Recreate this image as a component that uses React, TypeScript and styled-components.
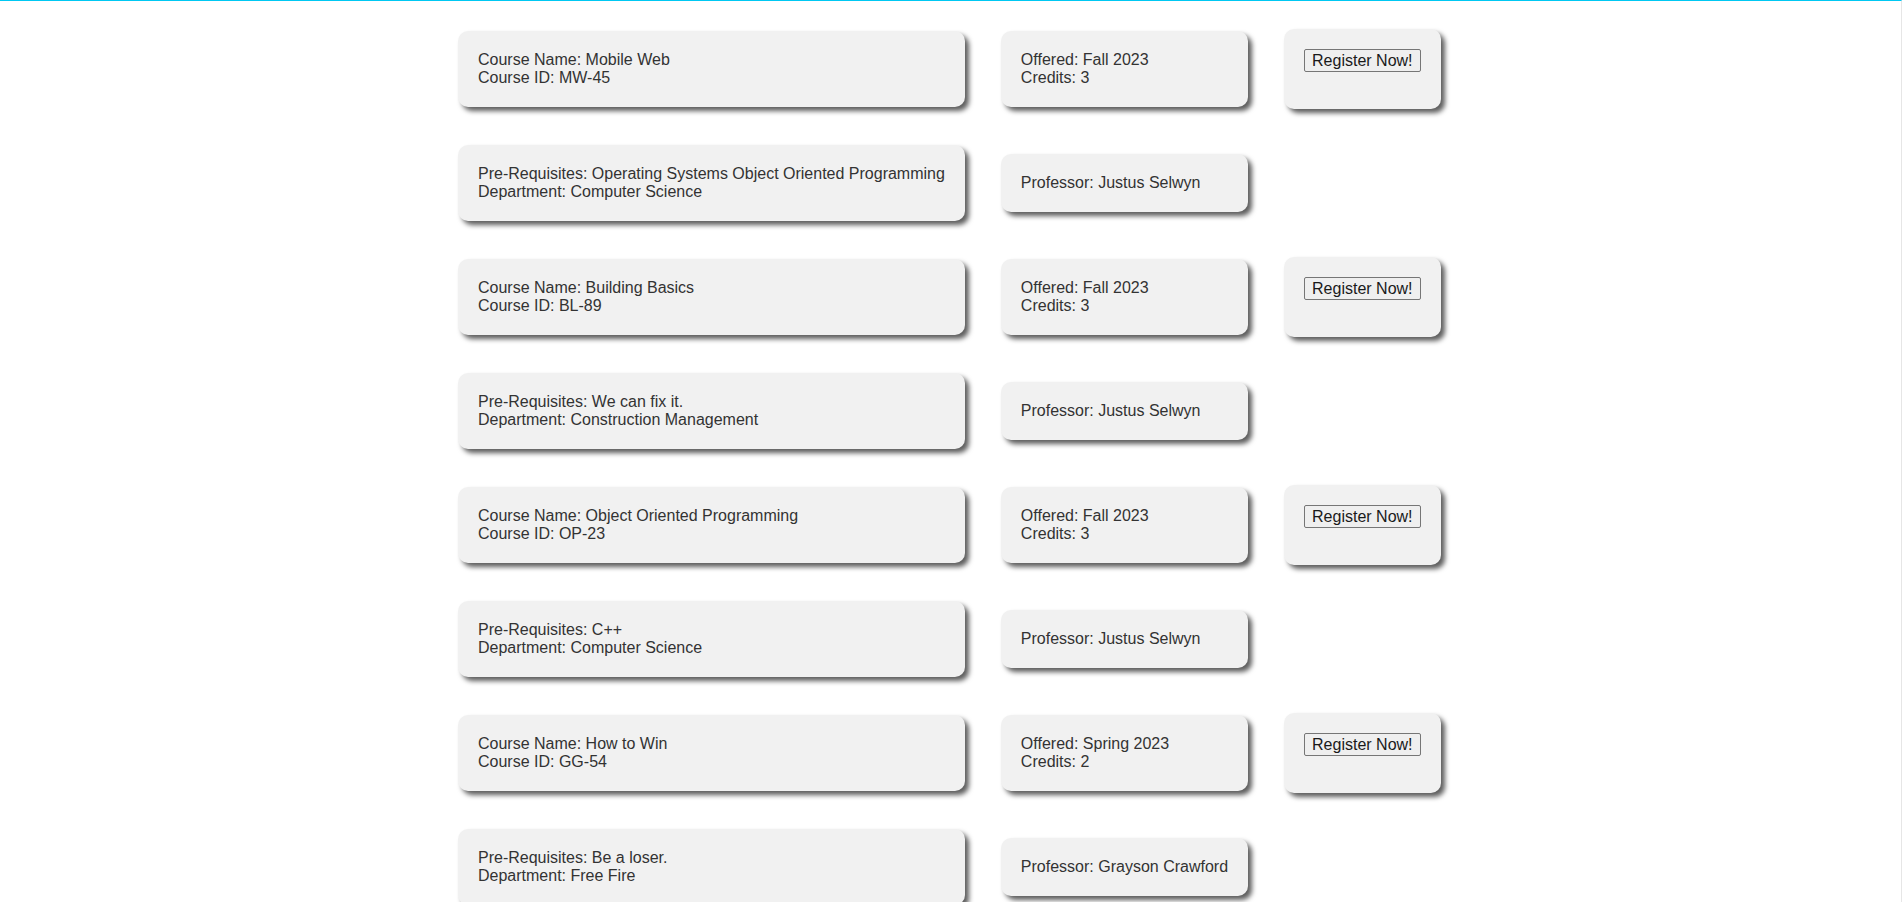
import React from "react";
import styled, { createGlobalStyle } from "styled-components";

const GlobalStyle = createGlobalStyle`
  html, body {
    margin: 0;
    padding: 0;
    background: #ffffff;
  }
  body {
    font-family: "Liberation Sans", Arial, sans-serif;
    font-size: 16px;
    color: #333333;
    overflow: hidden;
  }
`;

const Page = styled.div`
  min-height: 100vh;
  box-sizing: border-box;
  border-top: 1px solid #00c8f2;
  border-right: 1px solid #e6e6e6;
  padding: 28px 0 40px 458px;
`;

const CourseGrid = styled.div`
  display: grid;
  grid-template-columns: max-content max-content max-content;
  column-gap: 36px;
  row-gap: 36px;
  align-items: center;
  justify-items: stretch;
`;

const Card = styled.div`
  box-sizing: border-box;
  background: #f1f1f1;
  border-radius: 10px;
  padding: 20px;
  box-shadow: 4px 4px 5px #5e5e5e;
  line-height: 18px;
`;

const InfoLine = styled.div`
  white-space: nowrap;
`;

const RegisterCard = styled.div`
  box-sizing: border-box;
  background: #f1f1f1;
  border-radius: 10px;
  padding: 20px 20px 37px;
  box-shadow: 4px 4px 5px #5e5e5e;
`;

const RegisterButton = styled.button`
  display: block;
  box-sizing: border-box;
  height: 23px;
  padding: 0 7px;
  font-family: "Liberation Sans", Arial, sans-serif;
  font-size: 16px;
  line-height: 21px;
  color: #1a1a1a;
  background: #efefef;
  border: 1px solid #767676;
  border-radius: 2px;
  white-space: nowrap;
  cursor: pointer;
`;

const EmptyCell = styled.div``;

type Course = {
  name: string;
  id: string;
  offered: string;
  credits: number;
  prereq: string;
  department: string;
  professor: string;
};

const courses: Course[] = [
  {
    name: "Mobile Web",
    id: "MW-45",
    offered: "Fall 2023",
    credits: 3,
    prereq: "Operating Systems Object Oriented Programming",
    department: "Computer Science",
    professor: "Justus Selwyn",
  },
  {
    name: "Building Basics",
    id: "BL-89",
    offered: "Fall 2023",
    credits: 3,
    prereq: "We can fix it.",
    department: "Construction Management",
    professor: "Justus Selwyn",
  },
  {
    name: "Object Oriented Programming",
    id: "OP-23",
    offered: "Fall 2023",
    credits: 3,
    prereq: "C++",
    department: "Computer Science",
    professor: "Justus Selwyn",
  },
  {
    name: "How to Win",
    id: "GG-54",
    offered: "Spring 2023",
    credits: 2,
    prereq: "Be a loser.",
    department: "Free Fire",
    professor: "Grayson Crawford",
  },
];

export default function App() {
  return (
    <>
      <GlobalStyle />
      <Page>
        <CourseGrid>
          {courses.map((c) => (
            <React.Fragment key={c.id}>
              <Card>
                <InfoLine>Course Name: {c.name}</InfoLine>
                <InfoLine>Course ID: {c.id}</InfoLine>
              </Card>
              <Card>
                <InfoLine>Offered: {c.offered}</InfoLine>
                <InfoLine>Credits: {c.credits}</InfoLine>
              </Card>
              <RegisterCard>
                <RegisterButton type="button">Register Now!</RegisterButton>
              </RegisterCard>
              <Card>
                <InfoLine>Pre-Requisites: {c.prereq}</InfoLine>
                <InfoLine>Department: {c.department}</InfoLine>
              </Card>
              <Card>
                <InfoLine>Professor: {c.professor}</InfoLine>
              </Card>
              <EmptyCell />
            </React.Fragment>
          ))}
        </CourseGrid>
      </Page>
    </>
  );
}
